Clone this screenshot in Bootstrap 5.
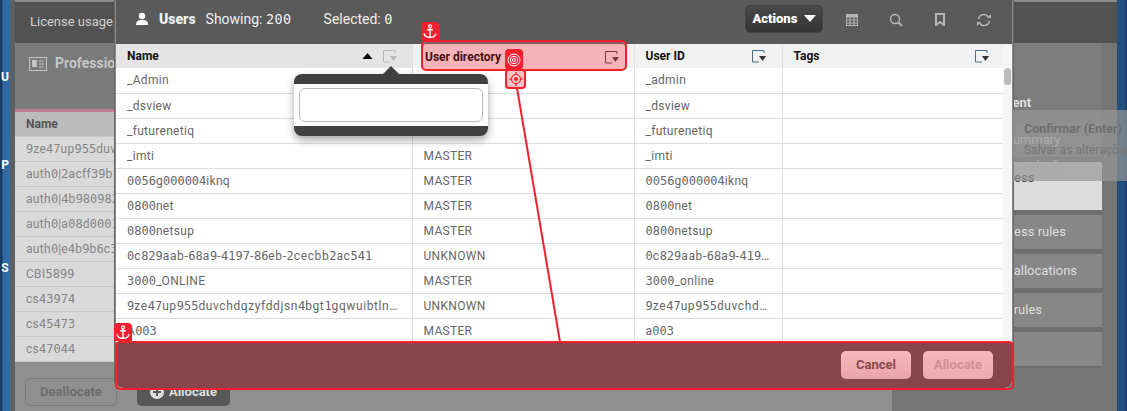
<!DOCTYPE html>
<html lang="en">
<head>
  <meta charset="UTF-8" />
  <title>Users</title>
  <link href="https://cdn.jsdelivr.net/npm/bootstrap@5.3.3/dist/css/bootstrap.min.css" rel="stylesheet"/>
  <style>
    html, body { height: 411px; overflow: hidden; }
    body { background: #757575; font-family: Roboto, sans-serif; font-size: 12px; color: #777; position: relative; }
    .num { font-family: "DejaVu Sans Mono", monospace; letter-spacing: 0; }
    /* page behind the dialog */
    .side-strip { width: 10px; background: linear-gradient(90deg, #173b63 20%, #2f6aa3 30%); flex: none; color: #fff; font-weight: 700; font-size: 12px; }
    .side-strip span { display: block; }
    .gutter { width: 5px; background: #5f5f5f; flex: none; }
    .right-strip { width: 10px; background: linear-gradient(90deg, #23507f 80%, #173b63 90%); flex: none; }
    .page-main { flex: 1; min-width: 0; }
    .top-bar { height: 43px; background: #525252; border-top: 2px solid #8a8a8a; color: #d0d0d0; font-size: 13px; padding: 10px 15px; white-space: nowrap; }
    .content-row { height: 368px; }
    .left-pane { width: 877px; background: #8f8f8f; flex: none; }
    .pane-head { height: 66px; background: #7a7a7a; color: #c4c4c4; font-size: 14px; font-weight: 700; padding: 10px 14px; }
    .pink-line { height: 3px; background: #bd7a90; }
    .bg-row { height: 25px; background: #d9d9d9; border-bottom: 1px solid #c6c6c6; padding-left: 11px; line-height: 24px; color: #868686; font-size: 12px; white-space: nowrap; overflow: hidden; letter-spacing: .3px; }
    .bg-row.head { background: #bcbcbc; color: #555; font-weight: 700; letter-spacing: 0; }
    .bg-rows { height: 250px; background: #d9d9d9; }
    .bg-foot { padding: 16px 10px; gap: 20px; }
    .ghost-btn { width: 92px; height: 28px; border: 1px solid #7d7d7d; border-radius: 5px; color: #6e6e6e; font-weight: 700; font-size: 13px; text-align: center; line-height: 26px; }
    .dark-btn { width: 93px; height: 28px; background: #585858; border-radius: 5px; color: #ddd; font-weight: 700; font-size: 13px; gap: 5px; }
    .right-pane { flex: 1; min-width: 0; background: #757575; padding-right: 5px; }
    .right-inner { width: 210px; background: #6f6f6f; height: 325px; overflow: hidden; }
    .right-title { height: 80px; background: #7c7c7c; padding: 50px 0 0 93px; color: #ddd; font-weight: 700; font-size: 13px; white-space: nowrap; }
    .right-item { height: 34px; background: #878787; margin-bottom: 5px; color: #ddd; font-size: 13px; line-height: 34px; white-space: nowrap; padding-left: 92px; }
    .right-item.sel { height: 48px; background: #dcdcdc; color: #444; line-height: 32px; }
    .right-item.from-acc { padding-left: 100px; }
    .right-item.from-sum { padding-left: 113px; }
    /* dialog */
    .dlg { position: absolute; left: 115px; top: 0; width: 898px; height: 389px; background: #fff; border: solid #8b8b8b; border-width: 0 1px 1px 1px; border-radius: 0 0 8px 8px; box-shadow: 0 0 0 1px #666; overflow: hidden; }
    .dlg-head { height: 44px; background: #5a5a5a; color: #eee; font-size: 14px; padding: 0 6px 6px 19px; }
    .dlg-head b { font-weight: 900; margin: 0 10px 0 10px; }
    .dlg-head .num { font-size: 13.5px; letter-spacing: .4px; }
    .dlg-head .sel-count { margin-left: 8px; }
    .act-btn { width: 78px; height: 28px; background: linear-gradient(#4a4a4a, #333); border: 1px solid #444; border-radius: 5px; color: #fff; font-weight: 900; font-size: 13px; padding: 0; margin-right: 7px; }
    .caret-down { display: inline-block; border: 6px solid transparent; border-top: 7px solid #fff; border-bottom: 0; margin-left: 3px; vertical-align: 1px; }
    .tool-ico { width: 44px; text-align: center; }
    .grid-wrap { height: 298px; overflow: hidden; position: relative; }
    .user-grid { table-layout: fixed; width: 887px; margin: 0; font-size: 12px; color: #666; }
    .user-grid th { height: 24px; padding: 0 11px; background: #f1f1f1; color: #111; font-weight: 700; border-bottom: 0; border-right: 1px solid #e2e2e2; vertical-align: middle; }
    .user-grid th.sorted { background: #e4e4e4; padding-right: 15px; }
    .user-grid th.id-col { padding-right: 16px; }
    .user-grid th.tag-col { padding-right: 14px; }
    .user-grid td { height: 25px; padding: 1px 11px 0; line-height: 23px; border-bottom: 1px solid #ddd; border-right: 1px solid #ddd; white-space: nowrap; overflow: hidden; text-overflow: ellipsis; color: #666; letter-spacing: .3px; }
    .user-grid td.long-id { letter-spacing: .6px; }
    .scroll-track { position: absolute; right: 0; top: 0; width: 9px; height: 298px; background: #f5f5f5; }
    .scroll-track::before { content: ""; position: absolute; left: 1px; top: 24px; width: 7px; height: 17px; background: #bbb; border-radius: 4px; }
    .dlg-foot { height: 46px; background: #87474a; padding-right: 19px; gap: 12px; box-shadow: inset 0 1px 0 #b07c80; }
    .foot-btn { width: 70px; height: 28px; border-radius: 5px; background: linear-gradient(#f6b9bc, #e8a4a8); color: #874a50; font-weight: 700; font-size: 13px; text-align: center; line-height: 28px; }
    .foot-btn.off { color: #cf8f95; background: linear-gradient(#f4b6ba, #ebaaae); }
    /* filter popover */
    .filter-pop { position: absolute; left: 294px; top: 74px; width: 194px; height: 62px; background: #fff; border: solid #404040; border-width: 10px 0 10px 0; border-radius: 8px; padding: 4px 5px; box-shadow: 0 4px 8px rgba(0,0,0,.35); }
    .filter-pop::before { content: ""; position: absolute; left: 89px; top: -18px; border: 8px solid transparent; border-top: 0; border-bottom: 8px solid #404040; }
    .filter-box { height: 34px; border: 1px solid #bbb; border-radius: 6px; }
    /* tutorial overlay */
    .hl-box { position: absolute; border: 2px solid #f4202f; border-radius: 5px; }
    .hl-col { left: 421px; top: 40px; width: 206px; height: 31px; background: #f4b4b8; color: #4a1015; font-weight: 700; padding: 6px 2px; box-shadow: inset 0 2px 0 #8d5a62; }
    .hl-foot { left: 115px; top: 341px; width: 899px; height: 49px; }
    .red-tab { position: absolute; background: #f4202f; width: 18px; height: 18px; border-radius: 4px 4px 0 0; display: flex; align-items: center; justify-content: center; }
    .tab-a { left: 421px; top: 22px; }
    .tab-b { left: 114px; top: 323px; }
    .tgt-a { position: absolute; left: 505px; top: 49px; width: 18px; height: 21px; background: #f4202f; border-radius: 4px; display: flex; align-items: center; justify-content: center; }
    .tgt-b { position: absolute; left: 505px; top: 69px; width: 21px; height: 20px; background: #f7c3c6; border: 2px solid #f4202f; border-radius: 4px; display: flex; align-items: center; justify-content: center; }
    .join-line { position: absolute; left: 0; top: 0; pointer-events: none; }
    .hint-tip { position: absolute; left: 1013px; top: 110px; width: 114px; height: 71px; background: rgba(150,150,150,.7); padding: 11px 0 0 11px; color: #6f6f6f; white-space: nowrap; overflow: hidden; line-height: 16px; }
    .hint-tip strong { display: block; margin-bottom: 5px; font-size: 12.5px; }
    .hint-tip span { display: block; color: #777; font-size: 12px; }
    .hint-tip span.faint { color: #aaa; }
  </style>
</head>
<body>

<!-- page behind the dialog -->
<div class="d-flex" style="height:411px">
  <div class="side-strip text-center">
    <span style="margin-top:68px">U</span>
    <span style="margin-top:70px">P</span>
    <span style="margin-top:85px">S</span>
  </div>
  <div class="gutter"></div>
  <div class="page-main">
    <div class="top-bar">License usage summary</div>
    <div class="content-row d-flex">
      <div class="left-pane">
        <div class="pane-head d-flex gap-2">
          <svg width="18" height="14" viewBox="0 0 18 14" class="mt-1"><rect x=".5" y=".5" width="17" height="13" fill="none" stroke="#c4c4c4"/><rect x="3" y="3" width="5" height="7" fill="#c4c4c4"/><path d="M10 4h5M10 7h5M10 10h5" stroke="#c4c4c4"/></svg>
          <span>Professional access</span>
        </div>
        <div class="pink-line"></div>
        <div class="bg-rows">
          <div class="bg-row head">Name</div>
          <div class="bg-row">9ze47up955duvchdq</div>
          <div class="bg-row">auth0|2acff39b1c</div>
          <div class="bg-row">auth0|4b980982ad</div>
          <div class="bg-row">auth0|a08d00017f</div>
          <div class="bg-row">auth0|e4b9b6c340</div>
          <div class="bg-row">CBI5899</div>
          <div class="bg-row">cs43974</div>
          <div class="bg-row">cs45473</div>
          <div class="bg-row">cs47044</div>
        </div>
        <div class="bg-foot d-flex">
          <div class="ghost-btn">Deallocate</div>
          <div class="dark-btn d-flex align-items-center justify-content-center">
            <svg width="14" height="14" viewBox="0 0 14 14"><circle cx="7" cy="7" r="7" fill="#ddd"/><path d="M7 3v8M3 7h8" stroke="#585858" stroke-width="2"/></svg>
            <span>Allocate</span>
          </div>
        </div>
      </div>
      <div class="right-pane">
        <div class="right-inner">
          <div class="right-title">Content</div>
          <div class="right-item from-sum">Summary</div>
          <div class="right-item from-acc sel">Access</div>
          <div class="right-item from-acc">Access rules</div>
          <div class="right-item">User allocations</div>
          <div class="right-item">User rules</div>
          <div class="right-item"></div>
        </div>
      </div>
    </div>
  </div>
  <div class="right-strip"></div>
</div>

<!-- Users dialog -->
<div class="dlg">
  <div class="dlg-head d-flex align-items-center">
    <svg width="14" height="14" viewBox="0 0 14 14"><circle cx="7" cy="4" r="3.2" fill="#fff"/><path d="M1 13c0-4 2-5 6-5s6 1 6 5z" fill="#fff"/></svg>
    <b>Users</b>
    <span class="me-4">Showing: <span class="num">200</span></span>
    <span class="sel-count">Selected: <span class="num">0</span></span>
    <div class="ms-auto d-flex align-items-center">
      <button class="act-btn">Actions <span class="caret-down"></span></button>
      <span class="tool-ico"><svg width="12" height="12" viewBox="0 0 12 12"><rect x=".5" y=".5" width="11" height="11" fill="none" stroke="#b5b5b5"/><rect x=".5" y=".5" width="11" height="3" fill="#b5b5b5"/><path d="M0 6h12M0 9h12M4 3v9M8 3v9" stroke="#b5b5b5"/></svg></span>
      <span class="tool-ico"><svg width="14" height="14" viewBox="0 0 14 14"><circle cx="6" cy="6" r="4.500" fill="none" stroke="#b5b5b5" stroke-width="1.500"/><path d="M9.500 9.500 13 13" stroke="#b5b5b5" stroke-width="2"/></svg></span>
      <span class="tool-ico"><svg width="10" height="13" viewBox="0 0 10 13"><path d="M1 1h8v11L5 9l-4 3z" fill="none" stroke="#b5b5b5" stroke-width="2"/></svg></span>
      <span class="tool-ico"><svg width="16" height="14" viewBox="0 0 16 14"><path d="M2.500 6A5.500 5.500 0 0 1 12.500 4M13.500 8A5.500 5.500 0 0 1 3.500 10" fill="none" stroke="#b5b5b5" stroke-width="1.500"/><path d="M11 5h4V1zM5 9H1v4z" fill="#b5b5b5"/></svg></span>
    </div>
  </div>
  <div class="grid-wrap">
    <table class="table user-grid">
      <colgroup><col style="width:296px"><col style="width:222px"><col style="width:148px"><col style="width:221px"></colgroup>
      <thead>
        <tr>
          <th class="sorted"><div class="d-flex align-items-center"><span class="me-auto">Name</span><svg width="11" height="6" viewBox="0 0 10 6" style="margin-right:10px"><path d="M5 0l5 6H0z" fill="#000"/></svg><svg width="14" height="13" viewBox="0 0 14 13"><path d="M12 3V.5H.5v11.500H7" fill="none" stroke="#b9b9b9"/><path d="M7 6h7l-3.500 5z" fill="#b9b9b9"/></svg></div></th>
          <th><div class="d-flex align-items-center"><span class="me-auto">User directory</span></div></th>
          <th class="id-col"><div class="d-flex align-items-center"><span class="me-auto">User ID</span><svg width="14" height="13" viewBox="0 0 14 13"><path d="M12 3V.5H.5v11.500H7" fill="none" stroke="#4a6d8c"/><path d="M7 6h7l-3.500 5z" fill="#333"/></svg></div></th>
          <th class="tag-col"><div class="d-flex align-items-center"><span class="me-auto">Tags</span><svg width="14" height="13" viewBox="0 0 14 13"><path d="M12 3V.5H.5v11.500H7" fill="none" stroke="#4a6d8c"/><path d="M7 6h7l-3.500 5z" fill="#333"/></svg></div></th>
        </tr>
      </thead>
      <tbody>
        <tr><td>_Admin</td><td>MASTER</td><td>_admin</td><td></td></tr>
        <tr><td>_dsview</td><td>MASTER</td><td>_dsview</td><td></td></tr>
        <tr><td>_futurenetiq</td><td>MASTER</td><td>_futurenetiq</td><td></td></tr>
        <tr><td>_imti</td><td>MASTER</td><td>_imti</td><td></td></tr>
        <tr><td>0056g000004iknq</td><td>MASTER</td><td>0056g000004iknq</td><td></td></tr>
        <tr><td>0800net</td><td>MASTER</td><td>0800net</td><td></td></tr>
        <tr><td>0800netsup</td><td>MASTER</td><td>0800netsup</td><td></td></tr>
        <tr><td class="long-id">0c829aab-68a9-4197-86eb-2cecbb2ac541</td><td>UNKNOWN</td><td class="long-id">0c829aab-68a9-4197-86eb-2cecbb2ac541</td><td></td></tr>
        <tr><td>3000_ONLINE</td><td>MASTER</td><td>3000_online</td><td></td></tr>
        <tr><td class="long-id">9ze47up955duvchdqzyfddjsn4bgt1gqwuibtlnmxyz</td><td>UNKNOWN</td><td class="long-id">9ze47up955duvchdqzyfddjsn4bgt1gq</td><td></td></tr>
        <tr><td>A003</td><td>MASTER</td><td>a003</td><td></td></tr>
      </tbody>
    </table>
    <div class="scroll-track"></div>
  </div>
  <div class="dlg-foot d-flex align-items-center justify-content-end">
    <div class="foot-btn">Cancel</div>
    <div class="foot-btn off">Allocate</div>
  </div>
</div>

<!-- name column filter -->
<div class="filter-pop"><div class="filter-box"></div></div>

<!-- tutorial overlay -->
<svg class="join-line" width="1127" height="411"><path d="M517 88 560 342" stroke="#f4202f" stroke-width="2"/></svg>
<div class="hl-box hl-col">
  <div class="d-flex align-items-center"><span class="me-auto">User directory</span><svg width="14" height="13" viewBox="0 0 14 13" class="me-1"><path d="M12 3V.5H.5v11.500H7" fill="none" stroke="#7a3a44"/><path d="M7 6h7l-3.500 5z" fill="#7a3a44"/></svg></div>
</div>
<div class="hl-box hl-foot"></div>
<div class="red-tab tab-a"><svg width="14" height="15" viewBox="0 0 12 13"><circle cx="6" cy="2" r="1.300" fill="none" stroke="#fff"/><path d="M6 3v9M3.500 5h5M1 8c0 2 2 3.500 5 3.500S11 10 11 8" fill="none" stroke="#fff" stroke-width="1.200"/></svg></div>
<div class="red-tab tab-b"><svg width="14" height="15" viewBox="0 0 12 13"><circle cx="6" cy="2" r="1.300" fill="none" stroke="#fff"/><path d="M6 3v9M3.500 5h5M1 8c0 2 2 3.500 5 3.500S11 10 11 8" fill="none" stroke="#fff" stroke-width="1.200"/></svg></div>
<div class="tgt-a"><svg width="14" height="14" viewBox="0 0 14 14"><circle cx="7" cy="7" r="6" fill="none" stroke="#fff"/><circle cx="7" cy="7" r="3.700" fill="none" stroke="#fff"/><circle cx="7" cy="7" r="1.500" fill="none" stroke="#fff"/></svg></div>
<div class="tgt-b"><svg width="14" height="14" viewBox="0 0 14 14"><circle cx="7" cy="7" r="4.500" fill="none" stroke="#f4202f" stroke-width="1.200"/><circle cx="7" cy="7" r="2" fill="#f4202f"/><path d="M7 0v3M7 11v3M0 7h3M11 7h3" stroke="#f4202f" stroke-width="1.200"/></svg></div>
<div class="hint-tip">
  <strong>Confirmar (Enter)</strong>
  <span>Salvar as alterações</span>
  <span class="faint">seleção.</span>
</div>

<script>
  // ids and names use the wide digits of the original grid font
  document.querySelectorAll(".user-grid td, .bg-row").forEach((cell) => {
    cell.innerHTML = cell.innerHTML.replace(/\d+/g, '<span class="num">$&</span>');
  });
</script>
<script src="https://cdn.jsdelivr.net/npm/bootstrap@5.3.3/dist/js/bootstrap.bundle.min.js"></script>
</body>
</html>
